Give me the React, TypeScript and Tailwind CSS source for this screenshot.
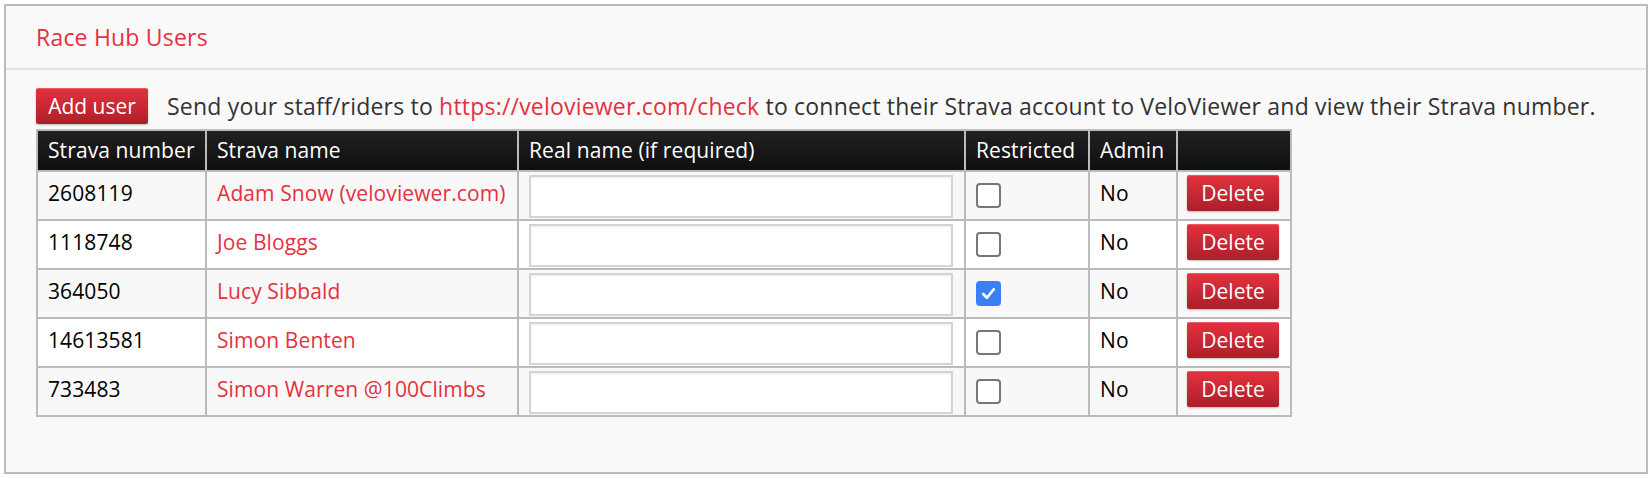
import React from "react";

type User = {
  num: string;
  name: string;
  restricted: boolean;
  admin: string;
};

const users: User[] = [
  { num: "2608119", name: "Adam Snow (veloviewer.com)", restricted: false, admin: "No" },
  { num: "1118748", name: "Joe Bloggs", restricted: false, admin: "No" },
  { num: "364050", name: "Lucy Sibbald", restricted: true, admin: "No" },
  { num: "14613581", name: "Simon Benten", restricted: false, admin: "No" },
  { num: "733483", name: "Simon Warren @100Climbs", restricted: false, admin: "No" },
];

function RedButton({ children, className = "" }: { children: React.ReactNode; className?: string }) {
  return (
    <button
      className={
        "h-[36px] whitespace-nowrap rounded-[2px] border-t border-[#ec5a63] bg-gradient-to-b from-[#e2323e] to-[#ad1f29] text-[21px] tracking-normal text-white shadow-[0_1px_2px_rgba(0,0,0,0.25)] " +
        className
      }
    >
      {children}
    </button>
  );
}

function Checkbox({ checked }: { checked: boolean }) {
  if (checked) {
    return (
      <div className="flex h-[25px] w-[25px] items-center justify-center rounded-[4px] bg-[#3b7ff6]">
        <svg width="17" height="17" viewBox="0 0 16 16" fill="none">
          <path d="M3 8.5 L6.5 12 L13 4" stroke="white" strokeWidth="2.6" strokeLinecap="round" strokeLinejoin="round" />
        </svg>
      </div>
    );
  }
  return <div className="h-[25px] w-[25px] rounded-[4px] border-2 border-[#777] bg-white" />;
}

const cell = "border-2 border-[#bbb] px-[10px] whitespace-nowrap overflow-hidden";

export default function App() {
  return (
    <div
      className="bg-white p-[4px] text-[23px] tracking-[0.2px] text-[#333]"
      style={{ fontFamily: '"Open Sans", "Noto Sans", sans-serif' }}
    >
      <div className="h-[470px] border-2 border-[#bbb] bg-[#f9f9f9]">
        <div className="flex h-[64px] items-center border-b-2 border-[#e3e3e3] px-[30px]">
          <h1 className="text-[23px] text-[#e5313f]">Race Hub Users</h1>
        </div>
        <div className="px-[30px] pt-[18px]">
          <div className="flex items-center gap-[19px]">
            <RedButton className="w-[112px]">Add user</RedButton>
            <p className="whitespace-nowrap">
              Send your staff/riders to <a className="text-[#e5313f]">https://veloviewer.com/check</a> to connect their Strava
              account to VeloViewer and view their Strava number.
            </p>
          </div>
          <table className="mt-[5px] w-[1254px] table-fixed border-collapse border-2 border-[#bbb] text-[21px] tracking-[0.1px]">
            <colgroup>
              <col className="w-[169px]" />
              <col className="w-[312px]" />
              <col className="w-[447px]" />
              <col className="w-[124px]" />
              <col className="w-[88px]" />
              <col className="w-[114px]" />
            </colgroup>
            <thead>
              <tr className="h-[41px] bg-gradient-to-b from-[#222] to-[#0e0e0e] text-left text-white">
                <th className={cell + " font-normal"}>Strava number</th>
                <th className={cell + " font-normal"}>Strava name</th>
                <th className={cell + " font-normal"}>Real name (if required)</th>
                <th className={cell + " font-normal"}>Restricted</th>
                <th className={cell + " font-normal"}>Admin</th>
                <th className={cell + " font-normal"}></th>
              </tr>
            </thead>
            <tbody>
              {users.map((u, i) => (
                <tr key={u.num} className={"h-[49px] " + (i % 2 === 0 ? "bg-[#f8f8f8]" : "bg-white")}>
                  <td className={cell + " pb-[3px] text-black"}>{u.num}</td>
                  <td className={cell + " pb-[3px] text-[#e5313f]"}>{u.name}</td>
                  <td className="border-2 border-[#bbb] pl-[10px] pr-[11px] pt-[3px] align-top">
                    <input
                      type="text"
                      className="block h-[43px] w-full border-2 border-[#d4d4d4] bg-white shadow-[inset_0_1px_2px_rgba(0,0,0,0.08)] outline-none"
                    />
                  </td>
                  <td className={cell}>
                    <Checkbox checked={u.restricted} />
                  </td>
                  <td className={cell + " pb-[3px] text-black"}>{u.admin}</td>
                  <td className="border-2 border-[#bbb] pl-[9px] pt-[3px] align-top">
                    <RedButton className="w-[92px]">Delete</RedButton>
                  </td>
                </tr>
              ))}
            </tbody>
          </table>
        </div>
      </div>
    </div>
  );
}
